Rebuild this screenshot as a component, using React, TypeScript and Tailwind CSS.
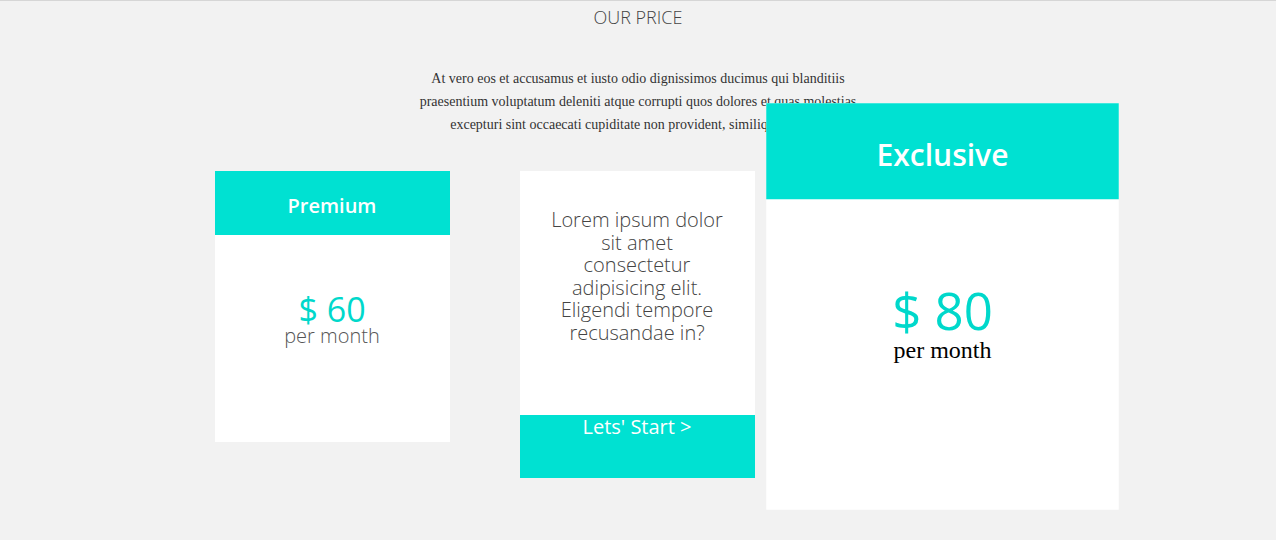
import React from 'react';

const sans = "font-['Open_Sans',sans-serif]";

function PlanCard({ title, price, serifPeriod = false, big = false }: { title: string; price: string; serifPeriod?: boolean; big?: boolean }) {
  return (
    <div className={`w-[235px] h-[271px] bg-white flex flex-col ${big ? 'scale-150 relative' : ''}`}>
      <div className="h-[64px] bg-[#00e1d2] flex items-center justify-center pt-[6px]">
        <h3 className={`${sans} text-[20px] font-semibold text-white`}>{title}</h3>
      </div>
      <div className="flex flex-col items-center pt-[57px]">
        <span className={`${sans} text-[34px] font-normal leading-none text-[#00d8cb]`}>{price}</span>
        {serifPeriod ? (
          <span className="font-['Liberation_Serif',serif] text-[16px] leading-[18px] text-black mt-[1px]">per month</span>
        ) : (
          <span className={`${sans} text-[20px] font-light leading-[20px] text-[#555]`}>per month</span>
        )}
      </div>
    </div>
  );
}

export default function App() {
  return (
    <div className="min-h-screen bg-[#f2f2f2] border-t border-[#d6d6d6]">
      <h2 className={`${sans} text-[18px] font-light leading-[24px] text-[#444] text-center pt-[4px]`}>OUR PRICE</h2>
      <p className="w-[450px] mx-auto mt-[38px] font-['Liberation_Serif',serif] text-[14px] leading-[23px] text-[#333] text-center">
        At vero eos et accusamus et iusto odio dignissimos ducimus qui blanditiis praesentium voluptatum deleniti atque corrupti quos dolores et quas molestias excepturi sint occaecati cupiditate non provident, similique sunt in.
      </p>

      <div className="flex justify-center items-start gap-[70px] mt-[35px] pr-[2px]">
        <PlanCard title="Premium" price="$ 60" />

        <div className="w-[235px] flex flex-col">
          <div className="h-[244px] bg-white px-[30px] pt-[38px]">
            <p className={`${sans} text-[20px] font-light leading-[22.6px] text-[#444] text-center`}>
              Lorem ipsum dolor sit amet consectetur adipisicing elit. Eligendi tempore recusandae in?
            </p>
          </div>
          <button className={`${sans} h-[63px] bg-[#00e1d2] text-white text-[20px] leading-[24px] flex justify-center`}>
            Lets' Start &gt;
          </button>
        </div>

        <PlanCard title="Exclusive" price="$ 80" serifPeriod big />
      </div>
    </div>
  );
}
